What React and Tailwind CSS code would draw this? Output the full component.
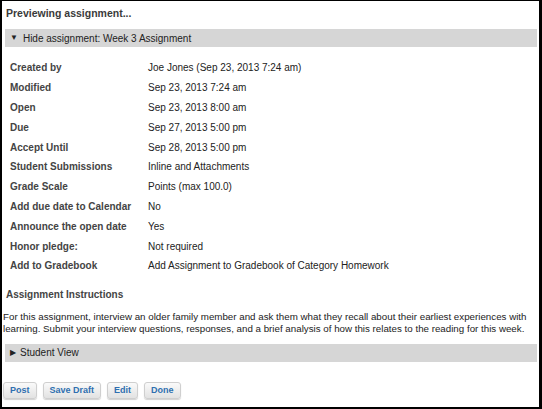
import React from "react";

const rows = [
  ["Created by", "Joe Jones (Sep 23, 2013 7:24 am)"],
  ["Modified", "Sep 23, 2013 7:24 am"],
  ["Open", "Sep 23, 2013 8:00 am"],
  ["Due", "Sep 27, 2013 5:00 pm"],
  ["Accept Until", "Sep 28, 2013 5:00 pm"],
  ["Student Submissions", "Inline and Attachments"],
  ["Grade Scale", "Points (max 100.0)"],
  ["Add due date to Calendar", "No"],
  ["Announce the open date", "Yes"],
  ["Honor pledge:", "Not required"],
  ["Add to Gradebook", "Add Assignment to Gradebook of Category Homework"],
];

function Btn({ children }) {
  return (
    <button className="h-[17px] px-[6px] rounded-[3px] border border-[#cfcfcf] bg-gradient-to-b from-[#fafafa] to-[#e2e2e2] text-[#2f6fb0] text-[9px] font-bold leading-none shadow-[0_1px_1px_rgba(0,0,0,0.18)]">
      {children}
    </button>
  );
}

export default function App() {
  return (
    <div className="w-[542px] h-[409px] bg-white border-l-2 border-r-[3px] border-t border-b-2 border-black text-[#333] overflow-hidden" style={{ fontFamily: '"Liberation Sans", Arial, sans-serif' }}>
      <div className="pl-[3px] pr-[2px]">
        <div className="pt-[5px] h-[28px] text-[10.5px] font-bold text-[#3a3a3a] pl-[1px]">Previewing assignment...</div>
        <div className="h-[18px] bg-[#d6d6d6] flex items-center pl-[5px] text-[10px] text-[#222]">
          <span className="text-[8px] mr-[5px]">▼</span>
          Hide assignment: Week 3 Assignment
        </div>
        <div className="pt-[11px] pl-[5px]">
          {rows.map(([k, v]) => (
            <div key={k} className="flex h-[19.8px] items-center text-[10px]">
              <div className="w-[138px] font-bold text-[#444]">{k}</div>
              <div className="text-[#222]">{v}</div>
            </div>
          ))}
        </div>
        <div className="mt-[11px] text-[10px] font-bold text-[#444] pl-[1px]">Assignment Instructions</div>
        <p className="mt-[9px] -ml-[2px] text-[9.75px] leading-[12.5px] text-[#222] whitespace-nowrap">
          <span className="block">For this assignment, interview an older family member and ask them what they recall about their earliest experiences with</span>
          <span className="block">learning. Submit your interview questions, responses, and a brief analysis of how this relates to the reading for this week.</span>
        </p>
        <div className="mt-[8px] h-[18px] bg-[#d6d6d6] flex items-center pl-[5px] text-[10px] text-[#222]">
          <span className="text-[8px] mr-[4px]">▶</span>
          Student View
        </div>
        <div className="mt-[20px] -ml-[2px] flex gap-[6px]">
          <Btn>Post</Btn>
          <Btn>Save Draft</Btn>
          <Btn>Edit</Btn>
          <Btn>Done</Btn>
        </div>
      </div>
    </div>
  );
}
